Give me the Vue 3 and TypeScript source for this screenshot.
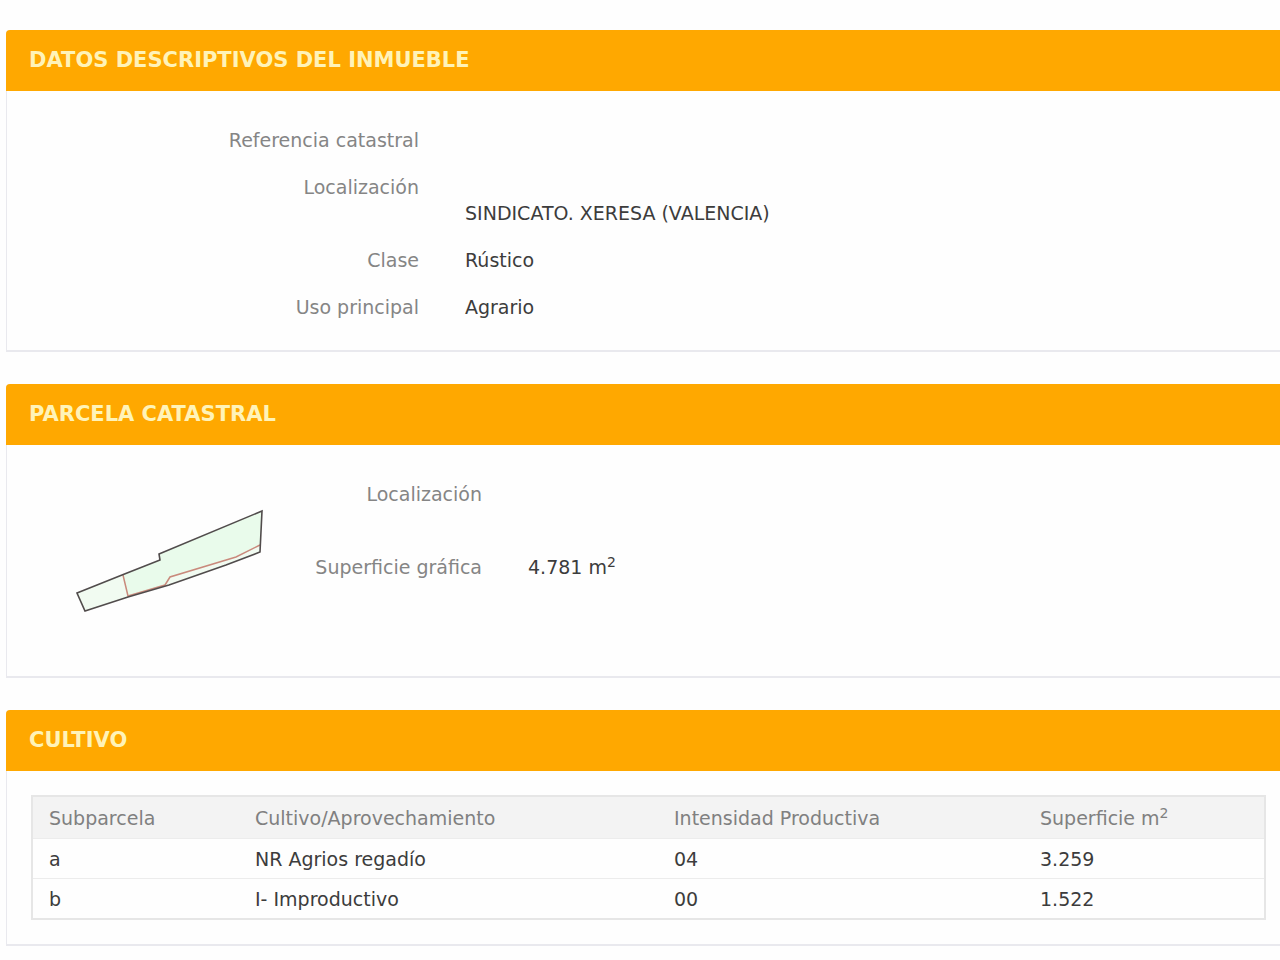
<script setup lang="ts">
interface Crop {
  plot: string
  use: string
  intensity: string
  area: string
}

const details: { label: string; lines: string[] }[] = [
  { label: 'Referencia catastral', lines: [] },
  { label: 'Localización', lines: ['', 'SINDICATO. XERESA (VALENCIA)'] },
  { label: 'Clase', lines: ['Rústico'] },
  { label: 'Uso principal', lines: ['Agrario'] },
]

const crops: Crop[] = [
  { plot: 'a', use: 'NR Agrios regadío', intensity: '04', area: '3.259' },
  { plot: 'b', use: 'I- Improductivo', intensity: '00', area: '1.522' },
]
</script>

<template>
  <main class="page">
    <section class="card">
      <h2 class="card-title">DATOS DESCRIPTIVOS DEL INMUEBLE</h2>
      <dl class="fields card-body">
        <div v-for="item in details" :key="item.label" class="field">
          <dt>{{ item.label }}</dt>
          <dd>
            <span v-for="(line, i) in item.lines" :key="i" class="line">{{ line }}</span>
          </dd>
        </div>
      </dl>
    </section>

    <section class="card">
      <h2 class="card-title">PARCELA CATASTRAL</h2>
      <div class="parcel card-body">
        <svg class="plan" viewBox="0 0 190 106" role="img" aria-label="Croquis de la parcela">
          <path d="M1 84 46 66 84 51 83 45 186 2 184 43 150 56 93 76 52 88 9 102Z" fill="#f1fbf1" />
          <path d="M47 66 84 51 83 45 186 2 184 36 160 47 95 68 90 76 52 87Z" fill="#e9fbeb" />
          <path d="M47 66 52 87 89 76 94 68 160 48 184 36" fill="none" stroke="#c98a7c" stroke-width="1.5" />
          <path d="M1 84 46 66 84 51 83 45 186 2 184 43 150 56 93 76 52 88 9 102Z" fill="none" stroke="#514c4c" stroke-width="1.6" />
        </svg>
        <dl class="fields">
          <div class="field">
            <dt>Localización</dt>
            <dd><span class="line"></span><span class="line"></span></dd>
          </div>
          <div class="field">
            <dt>Superficie gráfica</dt>
            <dd>4.781 m<sup>2</sup></dd>
          </div>
        </dl>
      </div>
    </section>

    <section class="card">
      <h2 class="card-title">CULTIVO</h2>
      <div class="crops">
        <table>
          <thead>
            <tr>
              <th class="col-plot" scope="col">Subparcela</th>
              <th class="col-use" scope="col">Cultivo/Aprovechamiento</th>
              <th class="col-intensity" scope="col">Intensidad Productiva</th>
              <th scope="col">Superficie m<sup>2</sup></th>
            </tr>
          </thead>
          <tbody>
            <tr v-for="crop in crops" :key="crop.plot">
              <td>{{ crop.plot }}</td>
              <td>{{ crop.use }}</td>
              <td>{{ crop.intensity }}</td>
              <td>{{ crop.area }}</td>
            </tr>
          </tbody>
        </table>
      </div>
    </section>
  </main>
</template>

<style>
body {
  margin: 0;
  background: #fefefe;
}
</style>

<style scoped>
.page {
  display: flex;
  flex-direction: column;
  gap: 32px;
  padding: 30px 0 14px 6px;
  font-family: "DejaVu Sans", Verdana, sans-serif;
  font-size: 19px;
  line-height: 26px;
  color: #3c3c3c;
}

.card {
  border: 2px solid #e9e9ee;
  border-width: 0 0 2px 1px;
  border-radius: 4px 0 0 0;
  background: #fefefe;
}

.card-title {
  margin: 0 0 0 -1px;
  padding: 17px 23px;
  border-radius: 4px 0 0 0;
  background: #ffa800;
  color: #fff3b8;
  font-size: 21px;
  font-weight: bold;
  line-height: 27px;
}

.card-body {
  padding: 36px 14px 30px 24px;
}

.fields {
  display: flex;
  flex-direction: column;
  gap: 21px;
  margin: 0;
}

.field {
  display: grid;
  grid-template-columns: 388px 1fr;
  column-gap: 46px;
}

dt {
  color: #858585;
  text-align: right;
}

dd {
  margin: 0;
}

.line {
  display: block;
  min-height: 26px;
}

sup {
  font-size: 14px;
  line-height: 0;
  vertical-align: 7px;
}

.parcel {
  display: flex;
  align-items: flex-start;
  gap: 24px;
  padding-bottom: 46px;
}

.parcel .fields {
  flex: 1;
}

.parcel .field {
  grid-template-columns: 192px 1fr;
}

.plan {
  width: 190px;
  height: 106px;
  margin: 28px 0 15px 45px;
}

.crops {
  padding: 24px 14px 24px 24px;
}

table {
  width: 100%;
  border: 2px solid #e6e6e6;
  border-collapse: collapse;
  table-layout: fixed;
}

th,
td {
  padding: 7px 16px 6px;
  text-align: left;
  font-weight: normal;
}

th {
  padding: 8px 16px 7px;
  background: #f3f3f3;
  color: #808080;
}

td {
  border-top: 1px solid #ececec;
}

.col-plot {
  width: 174px;
}

.col-use {
  width: 387px;
}

.col-intensity {
  width: 334px;
}
</style>
